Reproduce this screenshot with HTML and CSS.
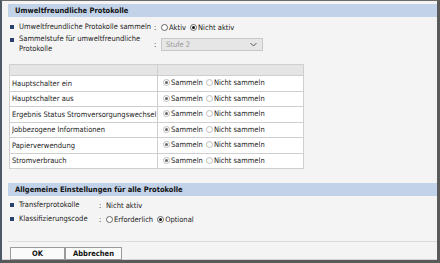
FILE: index.html
```html
<!DOCTYPE html>
<html>
<head>
<meta charset="utf-8">
<link rel="stylesheet" href="styles.css">
</head>
<body>
<div class="frame">
  <div class="band">Umweltfreundliche Protokolle</div>
  <div class="rows">
    <div class="row">
      <span class="bullet"></span>
      <span class="label">Umweltfreundliche Protokolle sammeln</span>
      <span class="colon">:</span>
      <span class="opt"><span class="radio"></span>Aktiv</span>
      <span class="opt"><span class="radio on"></span>Nicht aktiv</span>
    </div>
    <div class="row two">
      <span class="bullet"></span>
      <span class="label wrap">Sammelstufe für umweltfreundliche<br>Protokolle</span>
      <span class="colon">:</span>
      <span class="select">Stufe 2<svg class="chev" width="7" height="5" viewBox="0 0 7 5"><path d="M0.5 1 L3.5 4 L6.5 1" fill="none" stroke="#555" stroke-width="1"/></svg></span>
    </div>
  </div>
  <table class="grid">
    <tr class="head"><th></th><th></th></tr>
    <tr><td>Hauptschalter ein</td><td><span class="opt"><span class="radio g on"></span>Sammeln</span><span class="opt"><span class="radio g"></span>Nicht sammeln</span></td></tr>
    <tr><td>Hauptschalter aus</td><td><span class="opt"><span class="radio g on"></span>Sammeln</span><span class="opt"><span class="radio g"></span>Nicht sammeln</span></td></tr>
    <tr><td>Ergebnis Status Stromversorgungswechsel</td><td><span class="opt"><span class="radio g on"></span>Sammeln</span><span class="opt"><span class="radio g"></span>Nicht sammeln</span></td></tr>
    <tr><td>Jobbezogene Informationen</td><td><span class="opt"><span class="radio g on"></span>Sammeln</span><span class="opt"><span class="radio g"></span>Nicht sammeln</span></td></tr>
    <tr><td>Papierverwendung</td><td><span class="opt"><span class="radio g on"></span>Sammeln</span><span class="opt"><span class="radio g"></span>Nicht sammeln</span></td></tr>
    <tr><td>Stromverbrauch</td><td><span class="opt"><span class="radio g on"></span>Sammeln</span><span class="opt"><span class="radio g"></span>Nicht sammeln</span></td></tr>
  </table>
  <div class="band b2">Allgemeine Einstellungen für alle Protokolle</div>
  <div class="rows r2">
    <div class="row">
      <span class="bullet"></span>
      <span class="label l2">Transferprotokolle</span>
      <span class="colon">:</span>
      <span class="val">Nicht aktiv</span>
    </div>
    <div class="row">
      <span class="bullet"></span>
      <span class="label l2">Klassifizierungscode</span>
      <span class="colon">:</span>
      <span class="opt"><span class="radio"></span>Erforderlich</span>
      <span class="opt"><span class="radio on"></span>Optional</span>
    </div>
  </div>
  <div class="sep"></div>
  <div class="buttons">
    <button class="btn ok">OK</button><button class="btn">Abbrechen</button>
  </div>
</div>
</body>
</html>
```
FILE: styles.css
```css
html, body { margin: 0; padding: 0; }
body {
  width: 440px; height: 263px; overflow: hidden;
  background: #f4f4f4;
  font-family: "DejaVu Sans Condensed", "DejaVu Sans", sans-serif;
  font-size: 7.5px;
  color: #222;
}
.frame {
  box-sizing: border-box;
  width: 440px; height: 263px;
  border-left: 2px solid #4b5866;
  border-top: 1px solid #6b6b6b;
  border-right: 3px solid #5a5a5a;
  border-bottom: 3px solid #5a5a5a;
  box-shadow: inset 0 -1px #d4d4d4;
  padding: 3px 0 0 6px;
  background: #f4f4f4;
  overflow: hidden;
}
.band {
  background: #c2d2e8;
  height: 13px;
  line-height: 13px;
  font-weight: bold;
  padding-left: 7px;
  color: #111;
  white-space: nowrap;
}
.rows { padding: 4px 0 0 2px; }
.row { display: flex; align-items: center; min-height: 12px; white-space: nowrap; }
.row.two { min-height: 22px; }
.bullet { width: 4px; height: 4px; background: #2b3f6e; margin-right: 5px; flex: none; align-self: flex-start; margin-top: 4px; }
.row.two .bullet { margin-top: 5px; }
.label { width: 135px; flex: none; line-height: 10px; }
.label.l2 { width: 80px; }
.colon { width: 7px; flex: none; }
.opt { display: inline-flex; align-items: center; margin-right: 4px; }
.radio {
  box-sizing: border-box;
  width: 7px; height: 7px; border-radius: 50%;
  border: 1px solid #666; background: #fff; margin-right: 1px; position: relative; flex: none;
}
.radio.on::after {
  content: ""; position: absolute; left: 1px; top: 1px; width: 3px; height: 3px; border-radius: 50%; background: #111;
}
.radio.g { border-color: #bbb; }
.radio.g.on::after { background: #666; }
.select {
  box-sizing: border-box; width: 102px; height: 13px;
  border: 1px solid #c8c8c8; background: #e6e6e6; color: #999;
  display: flex; align-items: center; justify-content: space-between; padding: 0 5px 0 4px;
}
.grid {
  border-collapse: collapse;
  margin-top: 9px; margin-left: 1px;
  width: 295px;
  background: #fff;
  white-space: nowrap;
}
.grid td, .grid th { border: 1px solid #cfcfcf; padding: 0 0 0 2px; height: 14.5px; text-align: left; }
.grid td:first-child { width: 145px; }
.grid td + td { padding-left: 5px; }
.grid .head th { background: #e5e5e5; height: 10px; }
.grid td .opt { margin-right: 3px; }
.b2 { margin-top: 14px; }
.r2 { padding-top: 2px; }
.r2 .row { min-height: 14px; }
.r2 .bullet { margin-top: 5px; }
.sep { height: 1px; background: #dcdcdc; margin-top: 15px; }
.buttons { padding: 5px 0 0 2px; display: flex; }
.btn {
  font-family: inherit; font-size: 7.5px; font-weight: bold; color: #111;
  height: 13px; padding: 0; line-height: 11px; background: #fafafa;
  border: 1px solid #9a9a9a; margin: 0;
}
.btn.ok { width: 55px; }
.btn + .btn { width: 57px; }
```
